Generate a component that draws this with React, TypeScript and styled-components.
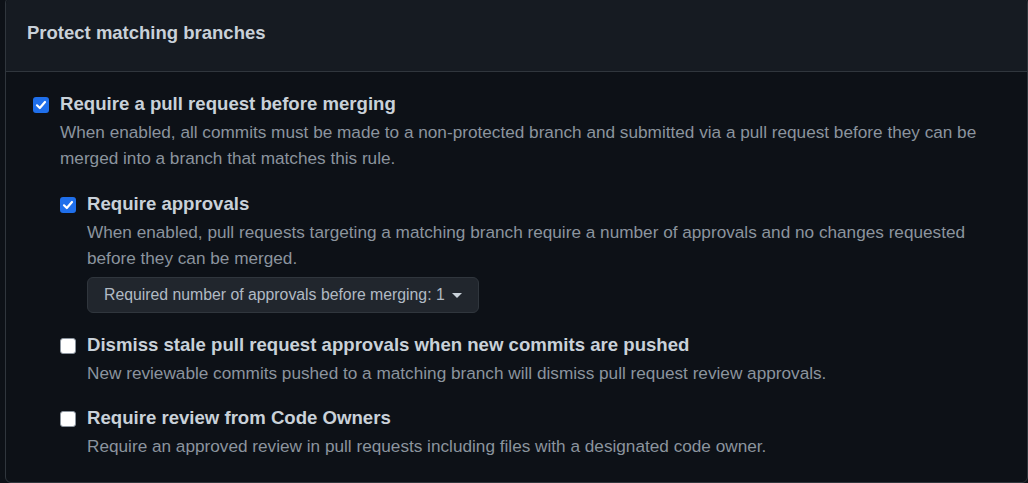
import React from "react";
import styled, { createGlobalStyle } from "styled-components";

const Global = createGlobalStyle`
  html, body { margin: 0; padding: 0; background: #0d1117; }
  body { font-family: "Liberation Sans", Arial, sans-serif; overflow: hidden; }
`;

const Page = styled.div`
  width: 1028px;
  height: 483px;
  padding-left: 5px;
  box-sizing: border-box;
  overflow: hidden;
`;

const Panel = styled.section`
  margin-top: -3px;
  width: 1023px;
  border: 1px solid #30363d;
  border-radius: 6px;
  background: #0d1117;
  box-sizing: border-box;
`;

const Header = styled.header`
  height: 74px;
  padding: 0 21px 4px;
  display: flex;
  align-items: center;
  box-sizing: border-box;
  background: #161b22;
  border-bottom: 1px solid #30363d;
  border-radius: 6px 6px 0 0;
`;

const Title = styled.h2`
  margin: 0;
  font-size: 18.5px;
  font-weight: 700;
  color: #c9d1d9;
`;

const Body = styled.div`
  padding: 20px 27px 23px;
  display: flex;
  flex-direction: column;
`;

const Item = styled.div`
  display: grid;
  grid-template-columns: 16px 1fr;
  column-gap: 11px;
  align-items: start;
`;

const Nested = styled.div`
  display: flex;
  flex-direction: column;
  gap: 20px;
  margin-top: 21px;
`;

const Box = styled.span<{ $checked?: boolean }>`
  width: 16px;
  height: 16px;
  margin-top: 5px;
  box-sizing: border-box;
  border-radius: 3px;
  display: flex;
  align-items: center;
  justify-content: center;
  background: ${(p) => (p.$checked ? "#1f6feb" : "#ffffff")};
  border: ${(p) => (p.$checked ? "none" : "1.5px solid #8b949e")};
`;

const Content = styled.div`
  display: flex;
  flex-direction: column;
`;

const Label = styled.div`
  font-size: 18.6px;
  line-height: 24px;
  font-weight: 700;
  color: #c9d1d9;
`;

const Desc = styled.p`
  margin: 3px 0 0;
  font-size: 17.2px;
  line-height: 26px;
  color: #8b949e;
`;

const Select = styled.button`
  margin-top: 6px;
  align-self: flex-start;
  height: 36px;
  padding: 0 16px;
  display: flex;
  align-items: center;
  gap: 7px;
  white-space: nowrap;
  background: #21262d;
  border: 1px solid #30363d;
  border-radius: 6px;
  color: #b1bac4;
  font-family: "Liberation Sans", Arial, sans-serif;
  font-size: 15.8px;
  box-sizing: border-box;
  cursor: pointer;
`;

const Caret = styled.span`
  flex: none;
  width: 0;
  height: 0;
  border-left: 5px solid transparent;
  border-right: 5px solid transparent;
  border-top: 5px solid #c9d1d9;
  margin-top: 1px;
`;

const Check = ({ checked }: { checked?: boolean }) => (
  <Box $checked={checked}>
    {checked && (
      <svg width="12" height="12" viewBox="0 0 12 12" fill="none">
        <path d="M2 6.3 L4.8 9 L10 3" stroke="#fff" strokeWidth="2.2" strokeLinecap="round" strokeLinejoin="round" />
      </svg>
    )}
  </Box>
);

export default function App() {
  return (
    <Page>
      <Global />
      <Panel>
        <Header>
          <Title>Protect matching branches</Title>
        </Header>
        <Body>
          <Item>
            <Check checked />
            <Content>
              <Label>Require a pull request before merging</Label>
              <Desc>
                When enabled, all commits must be made to a non-protected branch and submitted via a pull request before they can be merged into a branch that matches this rule.
              </Desc>
              <Nested>
                <Item>
                  <Check checked />
                  <Content>
                    <Label>Require approvals</Label>
                    <Desc>
                      When enabled, pull requests targeting a matching branch require a number of approvals and no changes requested before they can be merged.
                    </Desc>
                    <Select>
                      <span>Required number of approvals before merging: 1</span>
                      <Caret />
                    </Select>
                  </Content>
                </Item>
                <Item>
                  <Check />
                  <Content>
                    <Label>Dismiss stale pull request approvals when new commits are pushed</Label>
                    <Desc>New reviewable commits pushed to a matching branch will dismiss pull request review approvals.</Desc>
                  </Content>
                </Item>
                <Item>
                  <Check />
                  <Content>
                    <Label>Require review from Code Owners</Label>
                    <Desc>Require an approved review in pull requests including files with a designated code owner.</Desc>
                  </Content>
                </Item>
              </Nested>
            </Content>
          </Item>
        </Body>
      </Panel>
    </Page>
  );
}
